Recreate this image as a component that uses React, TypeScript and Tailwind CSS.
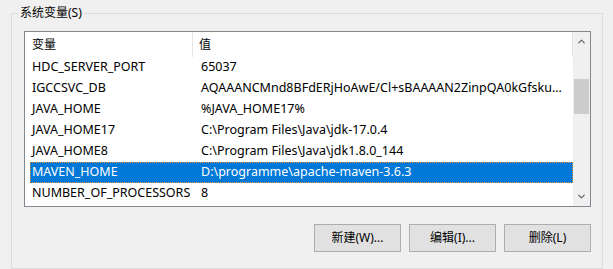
import { ChevronUp, ChevronDown } from "lucide-react";

const rows = [
  { name: "HDC_SERVER_PORT", value: "65037" },
  { name: "IGCCSVC_DB", value: "AQAAANCMnd8BFdERjHoAwE/Cl+sBAAAAN2ZinpQA0kGfsku..." },
  { name: "JAVA_HOME", value: "%JAVA_HOME17%" },
  { name: "JAVA_HOME17", value: "C:\\Program Files\\Java\\jdk-17.0.4" },
  { name: "JAVA_HOME8", value: "C:\\Program Files\\Java\\jdk1.8.0_144" },
  { name: "MAVEN_HOME", value: "D:\\programme\\apache-maven-3.6.3", selected: true },
  { name: "NUMBER_OF_PROCESSORS", value: "8" },
];

const font = "font-['Noto_Sans','Noto_Sans_CJK_SC',sans-serif]";

export default function App() {
  return (
    <div className={`w-[613px] h-[269px] bg-[#f0f0f0] pt-[13px] pl-[11px] text-[12px] text-black ${font}`}>
      {/* group box */}
      <div className="relative w-[592px] h-[256px] border border-[#dcdcdc] pl-[12px] pt-[17px]">
        <span className="absolute left-[6px] -top-[9px] px-[2px] bg-[#f0f0f0] leading-[16px]">
          系统变量(S)
        </span>

        {/* list view */}
        <div className="flex w-[567px] h-[176px] border border-[#828790] bg-white">
          <div className="flex-1 flex flex-col min-w-0 text-[12.5px]">
            <div className="flex h-[25px] items-center shrink-0 text-[12px]">
              <div className="w-[168px] pl-[7px] h-full flex items-center border-r border-[#e5e5e5]">变量</div>
              <div className="flex-1 pl-[6px] h-full flex items-center border-r border-[#e5e5e5]">值</div>
            </div>
            {rows.map((r) => (
              <div key={r.name} className="h-[21px] pl-[5px] shrink-0">
                <div
                  className={`flex h-full items-center ${
                    r.selected ? "bg-[#0078d7] text-white border border-dotted border-[#e8903a]" : "border border-transparent"
                  }`}
                >
                  <div className="w-[170px] pl-[1px] whitespace-nowrap">{r.name}</div>
                  <div className="flex-1 min-w-0 whitespace-nowrap">{r.value}</div>
                </div>
              </div>
            ))}
          </div>

          {/* scrollbar */}
          <div className="w-[17px] flex flex-col bg-[#f0f0f0]">
            <div className="h-[17px] mt-[1px] flex items-center justify-center text-[#606060]">
              <ChevronUp size={11} strokeWidth={2.5} />
            </div>
            <div className="h-[29px]" />
            <div className="h-[35px] mx-[1px] bg-[#cdcdcd]" />
            <div className="flex-1" />
            <div className="h-[17px] mb-[1px] flex items-center justify-center text-[#606060]">
              <ChevronDown size={11} strokeWidth={2.5} />
            </div>
          </div>
        </div>

        {/* buttons */}
        <div className="w-[567px] flex justify-end gap-[8px] mt-[17px]">
          {["新建(W)...", "编辑(I)...", "删除(L)"].map((b) => (
            <button
              key={b}
              className="w-[87px] h-[28px] bg-[#e1e1e1] border border-[#adadad] text-[12px] leading-none"
            >
              {b}
            </button>
          ))}
        </div>
      </div>
    </div>
  );
}
